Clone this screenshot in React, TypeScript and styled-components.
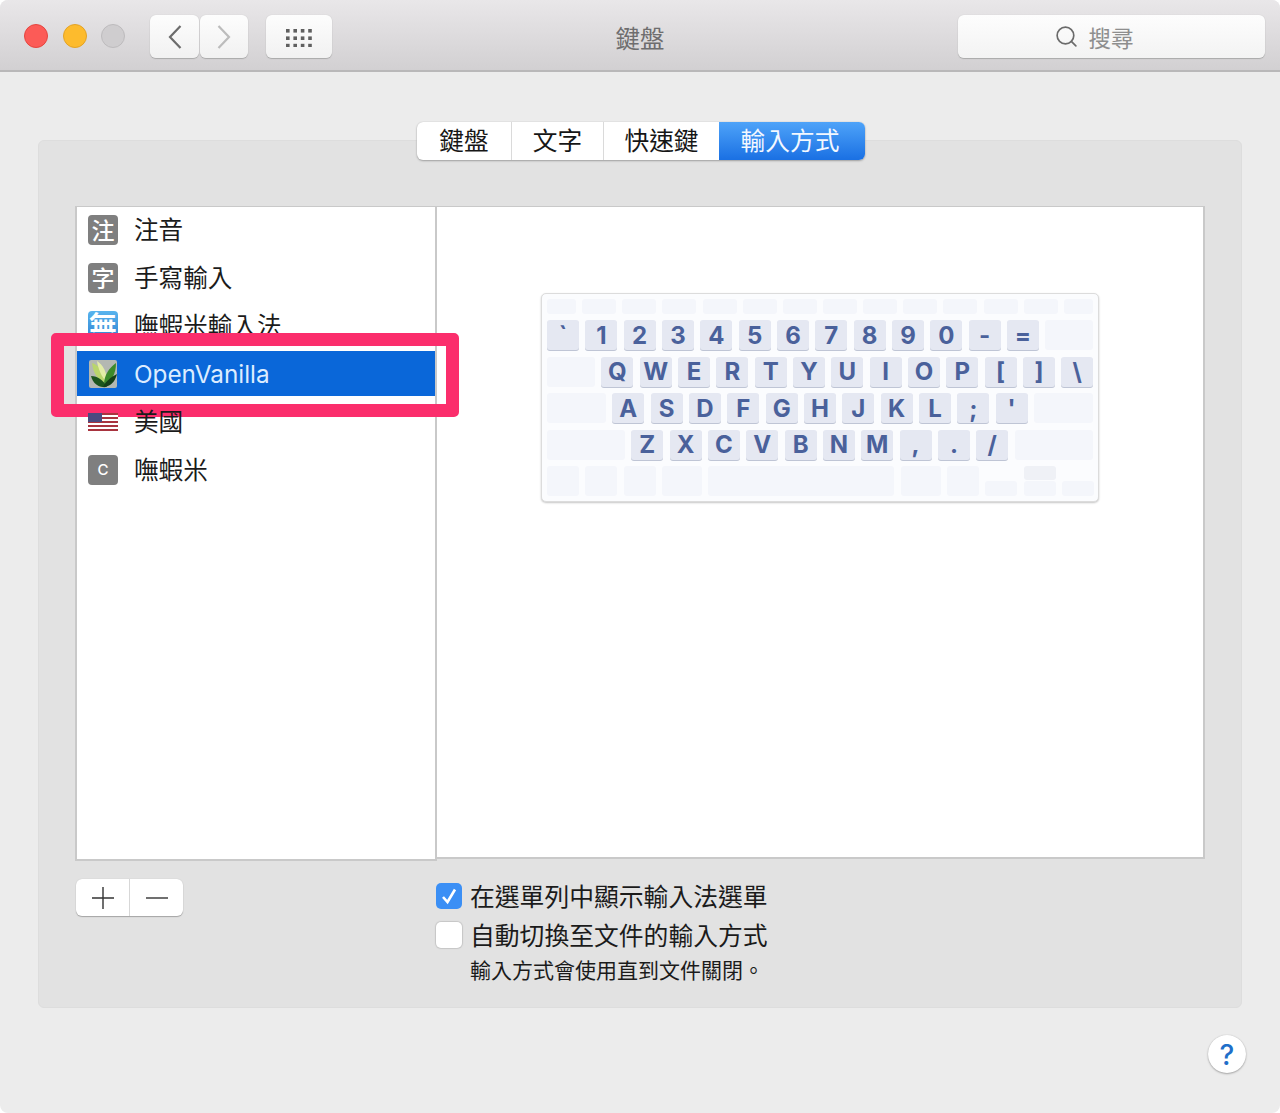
import React from 'react';
import styled, { createGlobalStyle } from 'styled-components';
import { Search } from 'lucide-react';

const GlobalStyle = createGlobalStyle`
  html, body {
    margin: 0;
    padding: 0;
    background: #fff;
  }
  body {
    font-family: Inter, "Noto Sans CJK TC", sans-serif;
    color: #1a1a1a;
  }
`;

const Window = styled.div`
  width: 1280px;
  height: 1113px;
  display: flex;
  flex-direction: column;
  background: #ececec;
  border-radius: 8px;
  overflow: hidden;
`;

const TitleBar = styled.header`
  height: 72px;
  box-sizing: border-box;
  flex: none;
  display: flex;
  align-items: flex-start;
  padding: 15px 15px 0 24px;
  background: linear-gradient(#e9e7e9, #d2d0d2);
  border-bottom: 2px solid #b9b8b9;
  position: relative;
`;

const Lights = styled.div`
  display: flex;
  gap: 14.5px;
  margin: 9px 25px 0 0;
`;

const Light = styled.span<{ $color: string; $edge: string }>`
  width: 24px;
  height: 24px;
  box-sizing: border-box;
  border-radius: 50%;
  background: ${p => p.$color};
  border: 1px solid ${p => p.$edge};
`;

const ToolButton = styled.button<{ $width: number; $gap?: number }>`
  width: ${p => p.$width}px;
  height: 43px;
  margin-right: ${p => p.$gap ?? 0}px;
  padding: 0;
  flex: none;
  display: flex;
  align-items: center;
  justify-content: center;
  background: linear-gradient(#fdfdfd, #f1f1f1);
  border: 0;
  border-radius: 6px;
  box-shadow: 0 1px 1px #a9a9a9, 0 0 1px #bdbdbd;
`;

const Title = styled.div`
  position: absolute;
  left: 0;
  right: 0;
  top: 22px;
  text-align: center;
  font-size: 24.5px;
  line-height: 34px;
  color: #6e6d6e;
`;

const SearchBox = styled.div`
  width: 307px;
  height: 43px;
  margin-left: auto;
  display: flex;
  align-items: center;
  justify-content: center;
  gap: 9px;
  background: linear-gradient(#fdfdfd, #f3f3f3);
  border-radius: 6px;
  box-shadow: 0 1px 1px #a9a9a9, 0 0 1px #bdbdbd;
  font-size: 22.5px;
  color: #8e8e8e;
  padding-right: 35px;
  box-sizing: border-box;
`;

const Main = styled.main`
  flex: 1;
  display: flex;
  flex-direction: column;
  padding: 50px 34px 0 38px;
`;

const Tabs = styled.div`
  align-self: center;
  margin-right: 2px;
  display: flex;
  height: 38px;
  position: relative;
  z-index: 1;
  border-radius: 6px;
  background: #fff;
  box-shadow: 0 1px 2px #9f9f9f, 0 0 1px #bbb;
`;

const Tab = styled.div<{ $width: number; $active?: boolean }>`
  width: ${p => p.$width}px;
  box-sizing: border-box;
  padding: 0 ${p => (p.$active ? 4 : 0)}px 4px 0;
  display: flex;
  align-items: center;
  justify-content: center;
  font-size: 24.7px;
  color: ${p => (p.$active ? '#f3f8ff' : '#161616')};
  background: ${p => (p.$active ? 'linear-gradient(#4ea3f9, #1a70e3)' : 'transparent')};
  border-radius: ${p => (p.$active ? '0 6px 6px 0' : '0')};
  &:not(:first-child):not(:last-child) {
    border-left: 1px solid #dadada;
  }
`;

const Panel = styled.section`
  margin: -20px 4px 0 0;
  height: 868px;
  box-sizing: border-box;
  padding: 65px 36px 0;
  background: #e2e2e2;
  border: 1px solid #dddddd;
  border-radius: 6px;
`;

const Split = styled.div`
  display: flex;
  align-items: flex-start;
`;

const List = styled.ul`
  width: 362px;
  height: 655px;
  box-sizing: border-box;
  flex: none;
  margin: 0;
  padding: 0;
  list-style: none;
  background: #fff;
  border: 2px solid #c9c9c9;
  border-top-width: 1px;
`;

const Row = styled.li<{ $selected?: boolean }>`
  height: 48px;
  box-sizing: border-box;
  padding: 0 0 6px 11px;
  display: flex;
  align-items: center;
  gap: 16px;
  font-size: 24.6px;
  color: #1b1b1b;
  position: relative;
  ${p =>
    p.$selected &&
    `
    height: 45px;
    margin-bottom: 3px;
    padding: 1px 0 0 12px;
    gap: 17px;
    background: #0a67d9;
    color: #dcecff;
    font-size: 24.3px;
  `}
`;

const Glyph = styled.span<{ $small?: boolean }>`
  width: 30px;
  height: 30px;
  box-sizing: border-box;
  margin-top: 4px;
  padding-bottom: ${p => (p.$small ? 1 : 3)}px;
  flex: none;
  display: flex;
  align-items: center;
  justify-content: center;
  border-radius: 4px;
  background: #7f7f7f;
  color: #fff;
  font-size: ${p => (p.$small ? 15 : 23)}px;
  font-weight: 500;
`;

const BlueGlyph = styled(Glyph)`
  background: linear-gradient(#58b4ee, #2e7fd0);
  font-size: 28px;
  font-weight: 700;
`;

const FlagWrap = styled.span`
  height: 30px;
  margin-top: 4px;
  flex: none;
`;

const Highlight = styled.div`
  position: absolute;
  left: -26px;
  right: -24px;
  top: -18px;
  bottom: -21px;
  border: 13px solid #fb2e6c;
  border-radius: 5px;
  pointer-events: none;
`;

const Detail = styled.div`
  flex: 1;
  height: 653px;
  box-sizing: border-box;
  margin-left: -1px;
  padding-top: 86px;
  display: flex;
  justify-content: center;
  align-items: flex-start;
  background: #fff;
  border: 2px solid #c9c9c9;
  border-top-width: 1px;
  border-left-width: 1px;
`;

const Board = styled.div`
  width: 558px;
  height: 209px;
  box-sizing: border-box;
  padding: 5px 5px 0;
  display: flex;
  flex-direction: column;
  gap: 6.4px;
  background: #fbfcfe;
  border: 1px solid #dcdcdc;
  border-radius: 5px;
  box-shadow: 0 1px 2px #c6c6c6;
`;

const KeyRow = styled.div<{ $height: number; $gap?: number }>`
  height: ${p => p.$height}px;
  display: flex;
  gap: ${p => p.$gap ?? 6.33}px;
`;

const Key = styled.div<{ $w?: number; $blank?: boolean; $grow?: boolean }>`
  width: ${p => p.$w ?? 32}px;
  flex: ${p => (p.$grow ? '1' : 'none')};
  display: flex;
  align-items: center;
  justify-content: center;
  border-radius: 3px;
  font-size: 24px;
  font-weight: 700;
  color: #4a619b;
  background: ${p => (p.$blank ? '#f4f6fb' : '#e5e8f2')};
  box-shadow: ${p => (p.$blank ? 'none' : '0 1px 0 #bfc5d5')};
`;

const ArrowColumn = styled.div`
  width: 32px;
  flex: none;
  display: flex;
  flex-direction: column;
  justify-content: flex-end;
  gap: 1px;
`;

const ArrowKey = styled.div<{ $tone?: string }>`
  height: 15px;
  border-radius: 3px;
  background: ${p => p.$tone ?? '#f4f6fb'};
`;

const Controls = styled.div`
  display: grid;
  grid-template-columns: 361px 1fr;
  padding-top: 18px;
`;

const PlusMinus = styled.div`
  margin-left: 1px;
  width: 107px;
  height: 37px;
  display: flex;
  background: #fff;
  border-radius: 6px;
  box-shadow: 0 1px 1px #a5a5a5, 0 0 1px #b9b9b9;
`;

const Segment = styled.div`
  flex: 1;
  display: flex;
  align-items: center;
  justify-content: center;
  & + & {
    border-left: 1px solid #d7d7d7;
  }
`;

const Options = styled.div`
  padding-top: 4px;
  display: flex;
  flex-direction: column;
  gap: 13px;
`;

const Option = styled.label`
  display: flex;
  align-items: center;
  gap: 8px;
  height: 26px;
  font-size: 24.8px;
  color: #1b1b1b;
`;

const OptionText = styled.span`
  margin-bottom: 2px;
`;

const Check = styled.span<{ $on?: boolean }>`
  width: 26px;
  height: 26px;
  box-sizing: border-box;
  flex: none;
  display: flex;
  align-items: center;
  justify-content: center;
  border-radius: 5px;
  background: ${p => (p.$on ? '#3b8ff5' : '#fff')};
  box-shadow: ${p => (p.$on ? 'none' : '0 0 1px 1px #c6c6c6')};
`;

const Note = styled.div`
  margin: -5px 0 0 34px;
  font-size: 21px;
  line-height: 30px;
  color: #1b1b1b;
`;

const Help = styled.button`
  align-self: flex-end;
  width: 38px;
  height: 38px;
  margin-top: 27px;
  padding: 2px 0 0;
  border: 0;
  border-radius: 50%;
  background: #fff;
  box-shadow: 0 1px 2px #a5a5a5, 0 0 1px #b5b5b5;
  color: #1f6fc9;
  font-family: Inter, sans-serif;
  font-size: 28px;
  font-weight: 500;
`;

const LeafIcon = () => (
  <svg width="28" height="28" viewBox="0 0 28 28">
    <rect width="28" height="28" rx="2" fill="#b4b8b2" />
    <path d="M3 3 C10 5 15 12 16 23 C9 20 4 13 3 3Z" fill="#b9d56c" />
    <path d="M8 1 C14 5 18 12 18 22 C13 18 9 9 8 1Z" fill="#e3eda6" />
    <path d="M27 3 C27 13 23 22 15 25 C15 15 20 8 27 3Z" fill="#3c8a2a" />
    <path d="M2 16 C9 16 14 20 18 27 C10 28 4 24 2 16Z" fill="#1b551d" />
    <path d="M28 14 C26 22 21 27 14 27 C17 21 22 17 28 14Z" fill="#153f18" />
  </svg>
);

const FlagIcon = () => (
  <svg width="30" height="30" viewBox="0 0 30 30">
    <rect y="6" width="30" height="18" fill="#fff" />
    {[6, 10, 14, 18, 22].map(y => (
      <rect key={y} y={y} width="30" height="2" fill="#a8343f" />
    ))}
    <rect y="6" width="14" height="9" fill="#4a4a80" />
  </svg>
);

const numberKeys = ['1', '2', '3', '4', '5', '6', '7', '8', '9', '0', '-', '='];
const topKeys = ['Q', 'W', 'E', 'R', 'T', 'Y', 'U', 'I', 'O', 'P', '[', ']', '\\'];
const homeKeys = ['A', 'S', 'D', 'F', 'G', 'H', 'J', 'K', 'L', ';', "'"];
const bottomKeys = ['Z', 'X', 'C', 'V', 'B', 'N', 'M', ',', '.', '/'];

const Keyboard = () => (
  <Board>
    <KeyRow $height={15} $gap={6.15}>
      <Key $blank $w={29} />
      {Array.from({ length: 12 }, (_, i) => (
        <Key key={i} $blank $w={34} />
      ))}
      <Key $blank $w={29} />
    </KeyRow>
    <KeyRow $height={30}>
      <Key>`</Key>
      {numberKeys.map(k => (
        <Key key={k}>{k}</Key>
      ))}
      <Key $blank $grow />
    </KeyRow>
    <KeyRow $height={30}>
      <Key $blank $w={48} />
      {topKeys.map(k => (
        <Key key={k}>{k}</Key>
      ))}
    </KeyRow>
    <KeyRow $height={30}>
      <Key $blank $w={59} />
      {homeKeys.map(k => (
        <Key key={k}>{k}</Key>
      ))}
      <Key $blank $grow />
    </KeyRow>
    <KeyRow $height={30}>
      <Key $blank $w={78} />
      {bottomKeys.map(k => (
        <Key key={k}>{k}</Key>
      ))}
      <Key $blank $grow />
    </KeyRow>
    <KeyRow $height={30}>
      <Key $blank />
      <Key $blank />
      <Key $blank />
      <Key $blank $w={40} />
      <Key $blank $w={186} />
      <Key $blank $w={40} />
      <Key $blank />
      <ArrowColumn>
        <ArrowKey />
      </ArrowColumn>
      <ArrowColumn>
        <ArrowKey $tone="#eff1f6" />
        <ArrowKey />
      </ArrowColumn>
      <ArrowColumn>
        <ArrowKey />
      </ArrowColumn>
    </KeyRow>
  </Board>
);

export default function App() {
  return (
    <Window>
      <GlobalStyle />
      <TitleBar>
        <Lights>
          <Light $color="#fc5b57" $edge="#e5453f" />
          <Light $color="#fdbb2d" $edge="#e3a326" />
          <Light $color="#cfcdcf" $edge="#bdbbbd" />
        </Lights>
        <ToolButton $width={49} $gap={1}>
          <svg width="16" height="26" viewBox="0 0 16 26">
            <path d="M13.5 2 L3 13 L13.5 24" fill="none" stroke="#6c6c6c" strokeWidth="2.2" />
          </svg>
        </ToolButton>
        <ToolButton $width={48} $gap={18}>
          <svg width="16" height="26" viewBox="0 0 16 26">
            <path d="M2.5 2 L13 13 L2.5 24" fill="none" stroke="#bcbcbc" strokeWidth="2.2" />
          </svg>
        </ToolButton>
        <ToolButton $width={66}>
          <svg width="28" height="20" viewBox="0 0 28 20">
            {[0, 1, 2].map(r =>
              [0, 1, 2, 3].map(c => (
                <rect key={`${r}-${c}`} x={c * 7.4 + 1} y={r * 7.4 + 2} width="3.6" height="3.6" fill="#5f5f5f" />
              ))
            )}
          </svg>
        </ToolButton>
        <Title>鍵盤</Title>
        <SearchBox>
          <Search size={25} color="#6b6b6b" strokeWidth={1.6} />
          搜尋
        </SearchBox>
      </TitleBar>
      <Main>
        <Tabs>
          <Tab $width={94}>鍵盤</Tab>
          <Tab $width={92}>文字</Tab>
          <Tab $width={116}>快速鍵</Tab>
          <Tab $width={146} $active>輸入方式</Tab>
        </Tabs>
        <Panel>
          <Split>
            <List>
              <Row><Glyph>注</Glyph>注音</Row>
              <Row><Glyph>字</Glyph>手寫輸入</Row>
              <Row><BlueGlyph>無</BlueGlyph>嘸蝦米輸入法</Row>
              <Row $selected>
                <LeafIcon />
                OpenVanilla
                <Highlight />
              </Row>
              <Row><FlagWrap><FlagIcon /></FlagWrap>美國</Row>
              <Row><Glyph $small>C</Glyph>嘸蝦米</Row>
            </List>
            <Detail>
              <Keyboard />
            </Detail>
          </Split>
          <Controls>
            <PlusMinus>
              <Segment>
                <svg width="22" height="22" viewBox="0 0 22 22">
                  <path d="M0 11 H22 M11 0 V22" stroke="#333" strokeWidth="1.4" />
                </svg>
              </Segment>
              <Segment>
                <svg width="22" height="22" viewBox="0 0 22 22">
                  <path d="M0 11 H22" stroke="#333" strokeWidth="1.4" />
                </svg>
              </Segment>
            </PlusMinus>
            <Options>
              <Option>
                <Check $on>
                  <svg width="18" height="18" viewBox="0 0 18 18">
                    <path d="M3 10 L7.5 15 L15 2.5" fill="none" stroke="#fff" strokeWidth="2.6" />
                  </svg>
                </Check>
                <OptionText>在選單列中顯示輸入法選單</OptionText>
              </Option>
              <Option>
                <Check />
                <OptionText>自動切換至文件的輸入方式</OptionText>
              </Option>
              <Note>輸入方式會使用直到文件關閉。</Note>
            </Options>
          </Controls>
        </Panel>
        <Help>?</Help>
      </Main>
    </Window>
  );
}
